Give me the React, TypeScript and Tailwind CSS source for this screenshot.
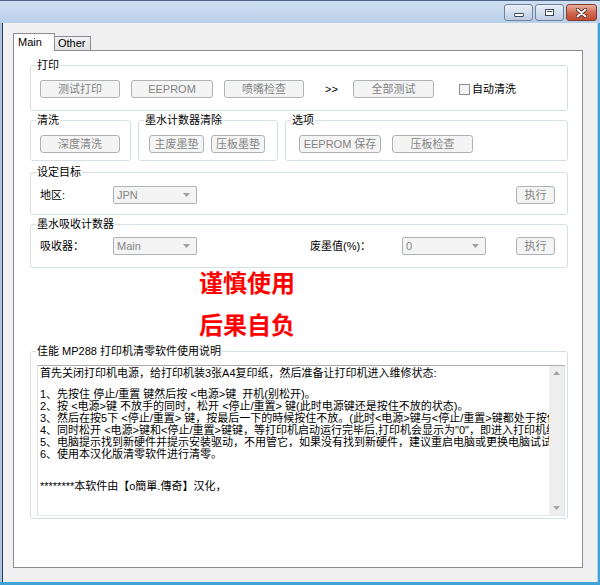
import type { ReactNode } from "react";

const uiFont = "font-['Liberation_Sans','Noto_Sans_CJK_SC',sans-serif]";

function Btn({ children, className = "" }: { children: ReactNode; className?: string }) {
  return (
    <div
      className={
        "flex h-[18px] shrink-0 items-center justify-center rounded-[3px] border border-[#adb2b5] bg-[#f4f4f4] text-[11px] leading-none text-[#838383] " +
        className
      }
    >
      {children}
    </div>
  );
}

function Combo({ value }: { value: string }) {
  return (
    <div className="flex h-[18px] w-[84px] shrink-0 items-center justify-between rounded-[2px] border border-[#adb2b5] bg-[#f4f4f4] pl-[3px] pr-[6px] text-[11px] leading-none text-[#838383]">
      <span>{value}</span>
      <svg width="7" height="4" viewBox="0 0 7 4">
        <path d="M0 0h7L3.5 4z" fill="#a0a0a0" />
      </svg>
    </div>
  );
}

// group box: the legend sits on the top border, padding lives on the inner div
function Group({
  title,
  className = "",
  inner = "",
  children,
}: {
  title: string;
  className?: string;
  inner?: string;
  children: ReactNode;
}) {
  return (
    <fieldset className={"min-w-0 rounded-[3px] border border-[#d5dfe5] " + className}>
      <legend className="ml-[5px] px-[1px] text-[11px] leading-[13px] text-black">{title}</legend>
      <div className={inner}>{children}</div>
    </fieldset>
  );
}

// empty strings are the blank lines of the note box
const notes = [
  "首先关闭打印机电源，给打印机装3张A4复印纸，然后准备让打印机进入维修状态:",
  "",
  "1、先按住 停止/重置 键然后按 <电源>键  开机(别松开)。",
  "2、按 <电源>键 不放手的同时，松开 <停止/重置> 键(此时电源键还是按住不放的状态)。",
  "3、然后在按5下 <停止/重置> 键，按最后一下的時候按住不放。(此时<电源>键与<停止/重置>键都处于按住的状态)",
  "4、同时松开 <电源>键和<停止/重置>键键，等打印机启动运行完毕后,打印机会显示为\"0\"，即进入打印机维修模式",
  "5、电脑提示找到新硬件并提示安装驱动，不用管它，如果没有找到新硬件，建议重启电脑或更换电脑试试",
  "6、使用本汉化版清零软件进行清零。",
  "",
  "",
  "********本软件由【o簡單.傳奇】汉化，",
];

export default function App() {
  return (
    <div className={"flex h-[585px] w-[600px] flex-col overflow-hidden bg-[#f0f0f0] " + uiFont}>
      {/* title bar */}
      <div className="flex h-[23px] shrink-0 items-start justify-end border-t border-[#4d6685] bg-gradient-to-b from-[#cfe0f2] to-[#b8cfe9] pr-[3px] pt-[3px]">
        <div className="flex gap-[2px]">
          <div className="flex h-[17px] w-[29px] items-center justify-center rounded-[3px] border border-[#6f819c] bg-gradient-to-b from-[#e9f0f8] to-[#bdcde2]">
            <div className="mt-[4px] h-[4px] w-[10px] rounded-[1px] border border-[#3c4a5e] bg-white" />
          </div>
          <div className="flex h-[17px] w-[29px] items-center justify-center rounded-[3px] border border-[#6f819c] bg-gradient-to-b from-[#e9f0f8] to-[#bdcde2]">
            <div className="h-[7px] w-[9px] border border-[#3c4a5e] bg-white p-[1px]">
              <div className="h-full w-full border-t border-[#3c4a5e]" />
            </div>
          </div>
          <div className="flex h-[17px] w-[31px] items-center justify-center rounded-[3px] border border-[#843a2c] bg-gradient-to-b from-[#eab1a3] via-[#d16a52] to-[#c24a30]">
            <svg width="11" height="10" viewBox="0 0 11 10">
              <path d="M1.5 1.5l8 7M9.5 1.5l-8 7" stroke="#3a1a14" strokeWidth="3.6" strokeLinecap="round" />
              <path d="M1.5 1.5l8 7M9.5 1.5l-8 7" stroke="#ffffff" strokeWidth="2" strokeLinecap="round" />
            </svg>
          </div>
        </div>
      </div>

      <div className="flex min-h-0 flex-1">
        <div className="w-[3px] shrink-0 border-r border-[#2c3e55] bg-[#a8c3e0]" />
        <div className="flex min-w-0 flex-1 flex-col pb-[14px] pl-[10px] pr-[14px] pt-[10px]">
          {/* tabs */}
          <div className="flex h-[17px] items-end">
            <div className="relative z-10 -mb-px flex h-[18px] w-[42px] shrink-0 items-start border border-b-0 border-[#898c95] bg-white pl-[4px] pt-[2px] text-[11px] leading-[13px] text-black">
              Main
            </div>
            <div className="flex h-[14px] w-[36px] shrink-0 items-center border-r border-t border-[#898c95] bg-gradient-to-b from-[#f2f2f2] to-[#e3e3e3] pl-[3px] text-[11px] leading-none text-black">
              Other
            </div>
          </div>

          {/* panel */}
          <div className="flex min-h-0 min-w-0 flex-1 flex-col border border-[#898c95] bg-white pl-[16px] pr-[14px]">
            <Group title="打印" className="mt-[8px] h-[52px]" inner="flex items-center pl-[9px] pt-[8px]">
              <Btn className="w-[80px]">测试打印</Btn>
              <Btn className="ml-[11px] w-[82px]">EEPROM</Btn>
              <Btn className="ml-[11px] w-[80px]">喷嘴检查</Btn>
              <span className="ml-[21px] w-[28px] text-[11px] leading-none text-black">&gt;&gt;</span>
              <Btn className="w-[81px]">全部测试</Btn>
              <div className="ml-[25px] h-[11px] w-[11px] border border-[#8f8f8f] bg-[#f4f4f4]" />
              <span className="ml-[2px] text-[11px] leading-none text-black">自动清洗</span>
            </Group>

            <div className="mt-[3px] flex gap-[7px]">
              <Group title="清洗" className="h-[47px] w-[101px]" inner="flex pl-[9px] pt-[8px]">
                <Btn className="w-[80px]">深度清洗</Btn>
              </Group>
              <Group title="墨水计数器清除" className="h-[47px] w-[140px]" inner="flex gap-[7px] pl-[10px] pt-[8px]">
                <Btn className="w-[55px]">主废墨垫</Btn>
                <Btn className="w-[54px]">压板墨垫</Btn>
              </Group>
              <Group title="选项" className="h-[47px] flex-1" inner="flex gap-[11px] pl-[13px] pt-[8px]">
                <Btn className="w-[82px]">EEPROM 保存</Btn>
                <Btn className="w-[81px]">压板检查</Btn>
              </Group>
            </div>

            <Group title="设定目标" className="mt-[5px] h-[49px]" inner="flex items-center pl-[9px] pr-[12px] pt-[7px]">
              <span className="w-[73px] text-[11px] leading-none text-black">地区:</span>
              <Combo value="JPN" />
              <div className="flex-1" />
              <Btn className="w-[39px]">执行</Btn>
            </Group>

            <Group title="墨水吸收计数器" className="mt-[3px] h-[50px]" inner="flex items-center pl-[9px] pr-[12px] pt-[6px]">
              <span className="w-[73px] text-[11px] leading-none text-black">吸收器：</span>
              <Combo value="Main" />
              <span className="ml-[113px] w-[92px] text-[11px] leading-none text-black">废墨值(%)：</span>
              <Combo value="0" />
              <div className="flex-1" />
              <Btn className="w-[39px]">执行</Btn>
            </Group>

            <div className="ml-[169px] mt-[4px] flex flex-col gap-[18px] text-[24px] font-bold leading-[24px] text-[#ff0000]">
              <span>谨慎使用</span>
              <span>后果自负</span>
            </div>

            <Group title="佳能 MP288 打印机清零软件使用说明" className="mt-[7px]" inner="pb-[2px] pl-[6px] pr-[2px] pt-[7px]">
              <div className="flex h-[151px] border border-[#abadb3] border-b-[#e3e9ef] border-l-[#e2e3ea] border-r-[#dbdfe6] bg-white">
                <div className="min-w-0 flex-1 overflow-hidden whitespace-pre pl-[2px] pt-[1px] text-[11px] leading-[12px] text-black">
                  {notes.map((line, i) => (
                    <div key={i} className={line ? "h-[12px]" : i === 1 ? "h-[9px]" : "h-[10px]"}>
                      {line}
                    </div>
                  ))}
                </div>
                <div className="flex w-[15px] shrink-0 flex-col items-center justify-between bg-[#eeeeee] py-[5px]">
                  <svg width="7" height="4" viewBox="0 0 7 4">
                    <path d="M3.5 0L7 4H0z" fill="#a3a3a3" />
                  </svg>
                  <svg width="7" height="4" viewBox="0 0 7 4">
                    <path d="M0 0h7L3.5 4z" fill="#a3a3a3" />
                  </svg>
                </div>
              </div>
            </Group>
          </div>
        </div>
        <div className="w-[3px] shrink-0 border-l border-[#b9d1ea] bg-[#3fa3d8]" />
      </div>
      <div className="h-[3px] shrink-0 bg-[#3fa3d8]" />
    </div>
  );
}
